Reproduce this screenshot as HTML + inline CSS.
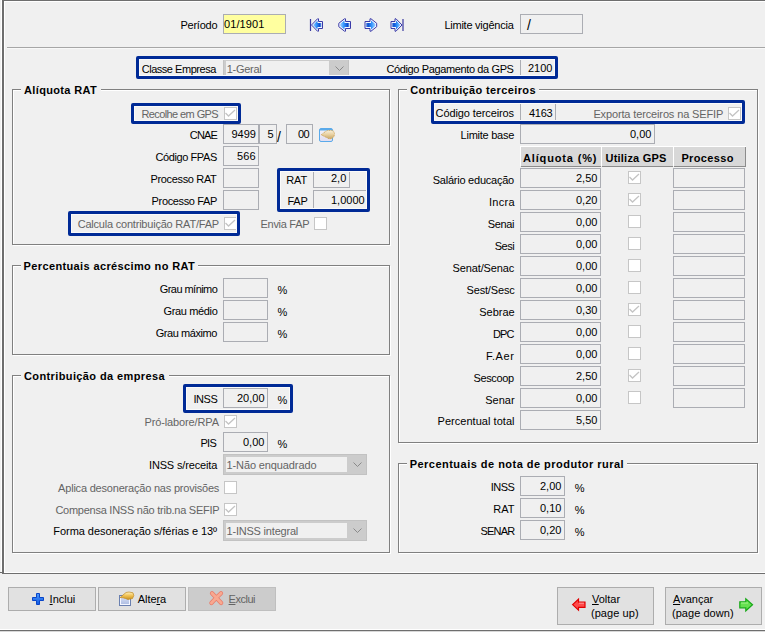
<!DOCTYPE html><html><head><meta charset="utf-8"><style>
html,body{margin:0;padding:0;width:765px;height:632px;overflow:hidden;background:#f0f0f0;position:relative}
.t{position:absolute;font-family:'Liberation Sans', sans-serif;font-size:11px;line-height:13px;white-space:nowrap;color:#000}
svg{overflow:visible}
</style></head><body>
<div style="position:absolute;left:1px;top:0px;width:1px;height:572px;background:#ffffff"></div>
<div style="position:absolute;left:0px;top:572px;width:3px;height:1px;background:#6e6e6e"></div>
<div style="position:absolute;left:2px;top:0px;width:2px;height:574px;background:#6e6e6e"></div>
<div style="position:absolute;left:4px;top:1px;width:761px;height:1px;background:#ffffff"></div>
<div style="position:absolute;left:4px;top:1px;width:1px;height:571px;background:#ffffff"></div>
<div style="position:absolute;left:2px;top:0px;width:763px;height:1px;background:#6e6e6e"></div>
<div style="position:absolute;left:4px;top:572px;width:761px;height:1px;background:#ffffff"></div>
<div style="position:absolute;left:3px;top:573px;width:762px;height:1px;background:#6e6e6e"></div>
<div style="position:absolute;left:0px;top:629px;width:765px;height:1px;background:#ffffff"></div>
<div style="position:absolute;left:0px;top:630px;width:765px;height:1px;background:#6e6e6e"></div>
<div style="position:absolute;left:0px;top:631px;width:765px;height:1px;background:#d8d8d8"></div>
<div class="t" style="top:19px;left:180.50px;letter-spacing:-0.250px;">Período</div>
<div style="position:absolute;left:223px;top:14px;width:61px;height:18px;border:1px solid #abadb3;background:#ffff9f"></div>
<div class="t" style="top:18px;left:224.00px;letter-spacing:0.100px;">01/1901</div>
<svg style="position:absolute;left:310px;top:18px" width="15" height="15"><defs><linearGradient id="gfirst" x1="0" y1="0" x2="1" y2="0"><stop offset="0" stop-color="#9fd0ff"/><stop offset="0.35" stop-color="#3c9cff"/><stop offset="0.8" stop-color="#0a4cd0"/><stop offset="1" stop-color="#8fb4ea"/></linearGradient></defs><g><path d="M1.5,7 L7.5,0.8 H8.5 V3.5 H12.5 V10.5 H8.5 V13.2 H7.5 Z" fill="#f4f8ff" stroke="#3a3aa8" stroke-width="1" stroke-linejoin="round"/><path d="M3,7 L7.5,2.6 V5 H11.5 V9 H7.5 V11.4 Z" fill="url(#gfirst)"/><line x1="0.5" y1="1" x2="0.5" y2="13" stroke="#3838a0" stroke-width="1.2"/></g></svg>
<svg style="position:absolute;left:338px;top:18px" width="15" height="15"><defs><linearGradient id="gprev" x1="0" y1="0" x2="1" y2="0"><stop offset="0" stop-color="#9fd0ff"/><stop offset="0.35" stop-color="#3c9cff"/><stop offset="0.8" stop-color="#0a4cd0"/><stop offset="1" stop-color="#8fb4ea"/></linearGradient></defs><g><path d="M0.8,5.3 L6.5,0.8 H7.5 V3.5 H12.5 V10.5 H7.5 V13.2 H6.5 L0.8,8.7 Z" fill="#f4f8ff" stroke="#3a3aa8" stroke-width="1" stroke-linejoin="round"/><path d="M2.2,6 L6.5,2.6 V5 H11.5 V9 H6.5 V11.4 L2.2,8 Z" fill="url(#gprev)"/></g></svg>
<svg style="position:absolute;left:364px;top:18px" width="15" height="15"><defs><linearGradient id="gnext" x1="0" y1="0" x2="1" y2="0"><stop offset="0" stop-color="#9fd0ff"/><stop offset="0.35" stop-color="#3c9cff"/><stop offset="0.8" stop-color="#0a4cd0"/><stop offset="1" stop-color="#8fb4ea"/></linearGradient></defs><g transform="translate(13.5,0) scale(-1,1)"><path d="M0.8,5.3 L6.5,0.8 H7.5 V3.5 H12.5 V10.5 H7.5 V13.2 H6.5 L0.8,8.7 Z" fill="#f4f8ff" stroke="#3a3aa8" stroke-width="1" stroke-linejoin="round"/><path d="M2.2,6 L6.5,2.6 V5 H11.5 V9 H6.5 V11.4 L2.2,8 Z" fill="url(#gnext)"/></g></svg>
<svg style="position:absolute;left:390px;top:18px" width="15" height="15"><defs><linearGradient id="glast" x1="0" y1="0" x2="1" y2="0"><stop offset="0" stop-color="#9fd0ff"/><stop offset="0.35" stop-color="#3c9cff"/><stop offset="0.8" stop-color="#0a4cd0"/><stop offset="1" stop-color="#8fb4ea"/></linearGradient></defs><g transform="translate(13.5,0) scale(-1,1)"><path d="M1.5,7 L7.5,0.8 H8.5 V3.5 H12.5 V10.5 H8.5 V13.2 H7.5 Z" fill="#f4f8ff" stroke="#3a3aa8" stroke-width="1" stroke-linejoin="round"/><path d="M3,7 L7.5,2.6 V5 H11.5 V9 H7.5 V11.4 Z" fill="url(#glast)"/><line x1="0.5" y1="1" x2="0.5" y2="13" stroke="#3838a0" stroke-width="1.2"/></g></svg>
<div class="t" style="top:19px;left:444.40px;letter-spacing:-0.243px;">Limite vigência</div>
<div style="position:absolute;left:520px;top:14px;width:61px;height:18px;border:1px solid #abadb3;background:#f0f0f0"></div>
<div class="t" style="top:19px;left:527px;font-size:14px;">/</div>
<div style="position:absolute;left:7px;top:47px;width:758px;height:1px;background:#a6a6a6"></div>
<div style="position:absolute;left:7px;top:48px;width:758px;height:1px;background:#f8f8f8"></div>
<div class="t" style="top:63px;left:141.70px;letter-spacing:-0.469px;">Classe Empresa</div>
<div style="position:absolute;left:223px;top:58px;width:124px;height:19px;border:1px solid #c2c2c2;background:#cccccc"></div>
<div style="position:absolute;left:226px;top:61px;width:103px;height:15px;background:#f0f0f0"></div>
<svg style="position:absolute;left:335px;top:66px" width="11" height="7"><polyline points="0.5,0.5 4.5,4.5 8.5,0.5" fill="none" stroke="#8a8a8a" stroke-width="1"/></svg>
<div class="t" style="top:63px;left:226.70px;letter-spacing:-0.283px;color:#646464;">1-Geral</div>
<div class="t" style="top:63px;left:386.50px;letter-spacing:-0.377px;">Código Pagamento da GPS</div>
<div style="position:absolute;left:520px;top:57px;width:35px;height:19px;border:1px solid #abadb3;background:#f0f0f0"></div>
<div class="t" style="top:62px;left:528.00px;">2100</div>
<div style="position:absolute;left:136px;top:56px;width:416px;height:17px;border:3px solid #002a96;border-radius:2px;box-shadow:inset 0 0 0 1px #fafafa"></div>
<div style="position:absolute;left:13px;top:90px;width:377px;height:155px;border-right:1px solid #fff;border-bottom:1px solid #fff;box-shadow:inset 1px 1px 0 #fff"></div>
<div style="position:absolute;left:12px;top:89px;width:376px;height:154px;border:1px solid #808080"></div>
<div style="position:absolute;left:21px;top:88px;width:80px;height:4px;background:#f0f0f0"></div>
<div class="t" style="top:84px;left:24.10px;letter-spacing:0.336px;font-weight:bold;">Alíquota RAT</div>
<div class="t" style="top:108px;left:141.40px;letter-spacing:-0.592px;color:#646464;">Recolhe em GPS</div>
<div style="position:absolute;left:224px;top:107px;width:11px;height:11px;border:1px solid #c6c6c6;background:#ffffff"></div>
<svg style="position:absolute;left:224px;top:107px" width="13" height="13"><polyline points="1.5,6 4.5,9 11,3" fill="none" stroke="#c4c4c4" stroke-width="1.3"/></svg>
<div style="position:absolute;left:131px;top:103px;width:104px;height:15px;border:3px solid #002a96;border-radius:2px;box-shadow:inset 0 0 0 1px #fafafa"></div>
<div class="t" style="top:129px;left:189.80px;letter-spacing:-0.800px;">CNAE</div>
<div style="position:absolute;left:223px;top:124px;width:34px;height:18px;border:1px solid #abadb3;background:#f0f0f0"></div>
<div class="t" style="top:128px;left:231.50px;letter-spacing:-0.033px;">9499</div>
<div style="position:absolute;left:259px;top:124px;width:16px;height:18px;border:1px solid #abadb3;background:#f0f0f0"></div>
<div class="t" style="top:128px;left:267.60px;">5</div>
<div class="t" style="top:131px;left:277px;font-size:14px;">/</div>
<div style="position:absolute;left:286px;top:124px;width:25px;height:18px;border:1px solid #abadb3;background:#f0f0f0"></div>
<div class="t" style="top:128px;left:297.90px;letter-spacing:-0.600px;">00</div>
<svg style="position:absolute;left:319px;top:128px" width="16" height="14"><defs><linearGradient id="wi" x1="0" y1="0" x2="0" y2="1"><stop offset="0" stop-color="#f4f4fa"/><stop offset="1" stop-color="#e0dcf0"/></linearGradient><linearGradient id="hd" x1="0" y1="0" x2="0" y2="1"><stop offset="0" stop-color="#f8f0dc"/><stop offset="0.5" stop-color="#e8d0a0"/><stop offset="1" stop-color="#c8a868"/></linearGradient></defs>
<rect x="0.5" y="0.5" width="13" height="13" rx="1.5" fill="url(#wi)" stroke="#5aaaea" stroke-width="1"/><rect x="1" y="1" width="12" height="1.5" fill="#5aaaea"/>
<path d="M2.2,6.8 L4.5,5 L6.5,3.5 L8.5,2.5 L12,2.3 L14.5,3 L15.5,5.5 L15,8.5 L13,10.5 L10,10.8 L8.5,10 L6.5,9 L4.5,8 Z" fill="url(#hd)" stroke="#caa050" stroke-width="0.8" stroke-dasharray="1.2,0.6"/></svg>
<div class="t" style="top:151px;left:155.60px;letter-spacing:-0.420px;">Código FPAS</div>
<div style="position:absolute;left:223px;top:146px;width:34px;height:18px;border:1px solid #abadb3;background:#f0f0f0"></div>
<div class="t" style="top:150px;left:237.00px;letter-spacing:0.150px;">566</div>
<div class="t" style="top:173px;left:150.50px;letter-spacing:-0.345px;">Processo RAT</div>
<div style="position:absolute;left:223px;top:168px;width:34px;height:18px;border:1px solid #abadb3;background:#f0f0f0"></div>
<div class="t" style="top:195px;left:151.60px;letter-spacing:-0.355px;">Processo FAP</div>
<div style="position:absolute;left:223px;top:190px;width:34px;height:18px;border:1px solid #abadb3;background:#f0f0f0"></div>
<div class="t" style="top:174px;left:286.30px;letter-spacing:-0.150px;">RAT</div>
<div style="position:absolute;left:313px;top:168px;width:35px;height:18px;border:1px solid #abadb3;background:#f0f0f0"></div>
<div class="t" style="top:172px;left:331.00px;">2,0</div>
<div class="t" style="top:195px;left:287.40px;letter-spacing:-0.200px;">FAP</div>
<div style="position:absolute;left:313px;top:190px;width:53px;height:18px;border:1px solid #abadb3;background:#f0f0f0"></div>
<div class="t" style="top:194px;left:331.00px;">1,0000</div>
<div style="position:absolute;left:277px;top:168px;width:87px;height:38px;border:3px solid #002a96;border-radius:2px;box-shadow:inset 0 0 0 1px #fafafa"></div>
<div class="t" style="top:218px;left:77.70px;letter-spacing:-0.211px;color:#646464;">Calcula contribuição RAT/FAP</div>
<div style="position:absolute;left:224px;top:217px;width:11px;height:11px;border:1px solid #c6c6c6;background:#ffffff"></div>
<svg style="position:absolute;left:224px;top:217px" width="13" height="13"><polyline points="1.5,6 4.5,9 11,3" fill="none" stroke="#c4c4c4" stroke-width="1.3"/></svg>
<div style="position:absolute;left:68px;top:211px;width:166px;height:19px;border:3px solid #002a96;border-radius:2px;box-shadow:inset 0 0 0 1px #fafafa"></div>
<div class="t" style="top:218px;left:260.50px;letter-spacing:-0.288px;color:#646464;">Envia FAP</div>
<div style="position:absolute;left:314px;top:217px;width:11px;height:11px;border:1px solid #c6c6c6;background:#ffffff"></div>
<div style="position:absolute;left:13px;top:266px;width:377px;height:89px;border-right:1px solid #fff;border-bottom:1px solid #fff;box-shadow:inset 1px 1px 0 #fff"></div>
<div style="position:absolute;left:12px;top:265px;width:376px;height:88px;border:1px solid #808080"></div>
<div style="position:absolute;left:21px;top:264px;width:177px;height:4px;background:#f0f0f0"></div>
<div class="t" style="top:260px;left:23.60px;letter-spacing:0.367px;font-weight:bold;">Percentuais acréscimo no RAT</div>
<div class="t" style="top:283px;left:159.70px;letter-spacing:-0.540px;">Grau mínimo</div>
<div style="position:absolute;left:223px;top:278px;width:43px;height:18px;border:1px solid #abadb3;background:#f0f0f0"></div>
<div class="t" style="top:284px;left:277.50px;">%</div>
<div class="t" style="top:305px;left:163.60px;letter-spacing:-0.367px;">Grau médio</div>
<div style="position:absolute;left:223px;top:300px;width:43px;height:18px;border:1px solid #abadb3;background:#f0f0f0"></div>
<div class="t" style="top:306px;left:277.50px;">%</div>
<div class="t" style="top:327px;left:155.70px;letter-spacing:-0.440px;">Grau máximo</div>
<div style="position:absolute;left:223px;top:322px;width:43px;height:18px;border:1px solid #abadb3;background:#f0f0f0"></div>
<div class="t" style="top:328px;left:277.50px;">%</div>
<div style="position:absolute;left:13px;top:376px;width:377px;height:177px;border-right:1px solid #fff;border-bottom:1px solid #fff;box-shadow:inset 1px 1px 0 #fff"></div>
<div style="position:absolute;left:12px;top:375px;width:376px;height:176px;border:1px solid #808080"></div>
<div style="position:absolute;left:21px;top:374px;width:148px;height:4px;background:#f0f0f0"></div>
<div class="t" style="top:370px;left:24.00px;letter-spacing:0.386px;font-weight:bold;">Contribuição da empresa</div>
<div class="t" style="top:393px;left:193.50px;letter-spacing:-0.467px;">INSS</div>
<div style="position:absolute;left:223px;top:388px;width:43px;height:18px;border:1px solid #abadb3;background:#f0f0f0"></div>
<div class="t" style="top:392px;left:237.00px;">20,00</div>
<div class="t" style="top:394px;left:277.50px;">%</div>
<div style="position:absolute;left:183px;top:384px;width:104px;height:23px;border:3px solid #002a96;border-radius:2px;box-shadow:inset 0 0 0 1px #fafafa"></div>
<div class="t" style="top:416px;left:144.50px;letter-spacing:-0.131px;color:#646464;">Pró-labore/RPA</div>
<div style="position:absolute;left:224px;top:415px;width:11px;height:11px;border:1px solid #c6c6c6;background:#ffffff"></div>
<svg style="position:absolute;left:224px;top:415px" width="13" height="13"><polyline points="1.5,6 4.5,9 11,3" fill="none" stroke="#c4c4c4" stroke-width="1.3"/></svg>
<div class="t" style="top:437px;left:200.40px;letter-spacing:-0.700px;">PIS</div>
<div style="position:absolute;left:223px;top:432px;width:43px;height:18px;border:1px solid #abadb3;background:#f0f0f0"></div>
<div class="t" style="top:436px;left:243.00px;">0,00</div>
<div class="t" style="top:438px;left:277.50px;">%</div>
<div class="t" style="top:459px;left:149.00px;letter-spacing:-0.154px;">INSS s/receita</div>
<div style="position:absolute;left:223px;top:454px;width:142px;height:19px;border:1px solid #c2c2c2;background:#cccccc"></div>
<div style="position:absolute;left:226px;top:457px;width:121px;height:15px;background:#f0f0f0"></div>
<svg style="position:absolute;left:353px;top:462px" width="11" height="7"><polyline points="0.5,0.5 4.5,4.5 8.5,0.5" fill="none" stroke="#8a8a8a" stroke-width="1"/></svg>
<div class="t" style="top:459px;left:226.50px;letter-spacing:-0.113px;color:#646464;">1-Não enquadrado</div>
<div class="t" style="top:482px;left:58.10px;letter-spacing:-0.203px;color:#646464;">Aplica desoneração nas provisões</div>
<div style="position:absolute;left:224px;top:481px;width:11px;height:11px;border:1px solid #c6c6c6;background:#ffffff"></div>
<div class="t" style="top:504px;left:55.40px;letter-spacing:-0.253px;color:#646464;">Compensa INSS não trib.na SEFIP</div>
<div style="position:absolute;left:224px;top:503px;width:11px;height:11px;border:1px solid #c6c6c6;background:#ffffff"></div>
<svg style="position:absolute;left:224px;top:503px" width="13" height="13"><polyline points="1.5,6 4.5,9 11,3" fill="none" stroke="#c4c4c4" stroke-width="1.3"/></svg>
<div class="t" style="top:525px;left:53.30px;letter-spacing:-0.052px;">Forma desoneração s/férias e 13º</div>
<div style="position:absolute;left:223px;top:520px;width:142px;height:19px;border:1px solid #c2c2c2;background:#cccccc"></div>
<div style="position:absolute;left:226px;top:523px;width:121px;height:15px;background:#f0f0f0"></div>
<svg style="position:absolute;left:353px;top:528px" width="11" height="7"><polyline points="0.5,0.5 4.5,4.5 8.5,0.5" fill="none" stroke="#8a8a8a" stroke-width="1"/></svg>
<div class="t" style="top:525px;left:226.50px;letter-spacing:-0.200px;color:#646464;">1-INSS integral</div>
<div style="position:absolute;left:399px;top:90px;width:359px;height:353px;border-right:1px solid #fff;border-bottom:1px solid #fff;box-shadow:inset 1px 1px 0 #fff"></div>
<div style="position:absolute;left:398px;top:89px;width:358px;height:352px;border:1px solid #808080"></div>
<div style="position:absolute;left:407px;top:88px;width:132px;height:4px;background:#f0f0f0"></div>
<div class="t" style="top:84px;left:410.30px;letter-spacing:0.376px;font-weight:bold;">Contribuição terceiros</div>
<div class="t" style="top:107px;left:435.60px;letter-spacing:-0.107px;">Código terceiros</div>
<div style="position:absolute;left:520px;top:102px;width:34px;height:19px;border:1px solid #abadb3;background:#f0f0f0"></div>
<div class="t" style="top:107px;left:529.00px;letter-spacing:-0.300px;">4163</div>
<div class="t" style="top:108px;left:593.40px;letter-spacing:-0.136px;color:#646464;">Exporta terceiros na SEFIP</div>
<div style="position:absolute;left:728px;top:107px;width:11px;height:11px;border:1px solid #c6c6c6;background:#ffffff"></div>
<svg style="position:absolute;left:728px;top:107px" width="13" height="13"><polyline points="1.5,6 4.5,9 11,3" fill="none" stroke="#c4c4c4" stroke-width="1.3"/></svg>
<div style="position:absolute;left:431px;top:100px;width:308px;height:18px;border:3px solid #002a96;border-radius:2px;box-shadow:inset 0 0 0 1px #fafafa"></div>
<div class="t" style="top:129px;left:460.60px;letter-spacing:-0.250px;">Limite base</div>
<div style="position:absolute;left:520px;top:124px;width:133px;height:18px;border:1px solid #abadb3;background:#f0f0f0"></div>
<div class="t" style="top:128px;left:630.00px;">0,00</div>
<div style="position:absolute;left:520px;top:146px;width:81px;height:1px;background:#ffffff"></div>
<div style="position:absolute;left:520px;top:146px;width:1px;height:20px;background:#ffffff"></div>
<div style="position:absolute;left:521px;top:147px;width:80px;height:19px;background:#d8d8d8"></div>
<div style="position:absolute;left:521px;top:166px;width:80px;height:1px;background:#8c8c8c"></div>
<div style="position:absolute;left:601px;top:146px;width:72px;height:1px;background:#ffffff"></div>
<div style="position:absolute;left:601px;top:146px;width:1px;height:20px;background:#ffffff"></div>
<div style="position:absolute;left:602px;top:147px;width:71px;height:19px;background:#d8d8d8"></div>
<div style="position:absolute;left:602px;top:166px;width:71px;height:1px;background:#8c8c8c"></div>
<div style="position:absolute;left:673px;top:146px;width:73px;height:1px;background:#ffffff"></div>
<div style="position:absolute;left:673px;top:146px;width:1px;height:20px;background:#ffffff"></div>
<div style="position:absolute;left:674px;top:147px;width:72px;height:19px;background:#d8d8d8"></div>
<div style="position:absolute;left:674px;top:166px;width:72px;height:1px;background:#8c8c8c"></div>
<div style="position:absolute;left:745px;top:147px;width:1px;height:20px;background:#8c8c8c"></div>
<div class="t" style="top:152px;left:523.00px;letter-spacing:0.845px;font-weight:bold;">Alíquota (%)</div>
<div class="t" style="top:152px;left:605.50px;letter-spacing:0.220px;font-weight:bold;">Utiliza GPS</div>
<div class="t" style="top:152px;left:681.40px;letter-spacing:0.371px;font-weight:bold;">Processo</div>
<div class="t" style="top:174px;left:432.70px;letter-spacing:-0.233px;">Salário educação</div>
<div style="position:absolute;left:520px;top:168px;width:79px;height:18px;border:1px solid #abadb3;background:#f0f0f0"></div>
<div class="t" style="top:172px;left:576.00px;">2,50</div>
<div style="position:absolute;left:628px;top:171px;width:11px;height:11px;border:1px solid #c6c6c6;background:#ffffff"></div>
<svg style="position:absolute;left:628px;top:171px" width="13" height="13"><polyline points="1.5,6 4.5,9 11,3" fill="none" stroke="#c4c4c4" stroke-width="1.3"/></svg>
<div style="position:absolute;left:673px;top:168px;width:70px;height:18px;border:1px solid #abadb3;background:#f0f0f0"></div>
<div class="t" style="top:196px;left:488.90px;letter-spacing:0.325px;">Incra</div>
<div style="position:absolute;left:520px;top:190px;width:79px;height:18px;border:1px solid #abadb3;background:#f0f0f0"></div>
<div class="t" style="top:194px;left:576.00px;">0,20</div>
<div style="position:absolute;left:628px;top:193px;width:11px;height:11px;border:1px solid #c6c6c6;background:#ffffff"></div>
<svg style="position:absolute;left:628px;top:193px" width="13" height="13"><polyline points="1.5,6 4.5,9 11,3" fill="none" stroke="#c4c4c4" stroke-width="1.3"/></svg>
<div style="position:absolute;left:673px;top:190px;width:70px;height:18px;border:1px solid #abadb3;background:#f0f0f0"></div>
<div class="t" style="top:218px;left:487.70px;letter-spacing:-0.375px;">Senai</div>
<div style="position:absolute;left:520px;top:212px;width:79px;height:18px;border:1px solid #abadb3;background:#f0f0f0"></div>
<div class="t" style="top:216px;left:576.00px;">0,00</div>
<div style="position:absolute;left:628px;top:215px;width:11px;height:11px;border:1px solid #c6c6c6;background:#ffffff"></div>
<div style="position:absolute;left:673px;top:212px;width:70px;height:18px;border:1px solid #abadb3;background:#f0f0f0"></div>
<div class="t" style="top:240px;left:494.70px;letter-spacing:-0.500px;">Sesi</div>
<div style="position:absolute;left:520px;top:234px;width:79px;height:18px;border:1px solid #abadb3;background:#f0f0f0"></div>
<div class="t" style="top:238px;left:576.00px;">0,00</div>
<div style="position:absolute;left:628px;top:237px;width:11px;height:11px;border:1px solid #c6c6c6;background:#ffffff"></div>
<div style="position:absolute;left:673px;top:234px;width:70px;height:18px;border:1px solid #abadb3;background:#f0f0f0"></div>
<div class="t" style="top:262px;left:452.60px;letter-spacing:-0.140px;">Senat/Senac</div>
<div style="position:absolute;left:520px;top:256px;width:79px;height:18px;border:1px solid #abadb3;background:#f0f0f0"></div>
<div class="t" style="top:260px;left:576.00px;">0,00</div>
<div style="position:absolute;left:628px;top:259px;width:11px;height:11px;border:1px solid #c6c6c6;background:#ffffff"></div>
<div style="position:absolute;left:673px;top:256px;width:70px;height:18px;border:1px solid #abadb3;background:#f0f0f0"></div>
<div class="t" style="top:284px;left:466.50px;letter-spacing:-0.162px;">Sest/Sesc</div>
<div style="position:absolute;left:520px;top:278px;width:79px;height:18px;border:1px solid #abadb3;background:#f0f0f0"></div>
<div class="t" style="top:282px;left:576.00px;">0,00</div>
<div style="position:absolute;left:628px;top:281px;width:11px;height:11px;border:1px solid #c6c6c6;background:#ffffff"></div>
<div style="position:absolute;left:673px;top:278px;width:70px;height:18px;border:1px solid #abadb3;background:#f0f0f0"></div>
<div class="t" style="top:306px;left:479.30px;letter-spacing:-0.020px;">Sebrae</div>
<div style="position:absolute;left:520px;top:300px;width:79px;height:18px;border:1px solid #abadb3;background:#f0f0f0"></div>
<div class="t" style="top:304px;left:576.00px;">0,30</div>
<div style="position:absolute;left:628px;top:303px;width:11px;height:11px;border:1px solid #c6c6c6;background:#ffffff"></div>
<svg style="position:absolute;left:628px;top:303px" width="13" height="13"><polyline points="1.5,6 4.5,9 11,3" fill="none" stroke="#c4c4c4" stroke-width="1.3"/></svg>
<div style="position:absolute;left:673px;top:300px;width:70px;height:18px;border:1px solid #abadb3;background:#f0f0f0"></div>
<div class="t" style="top:328px;left:493.00px;letter-spacing:-0.900px;">DPC</div>
<div style="position:absolute;left:520px;top:322px;width:79px;height:18px;border:1px solid #abadb3;background:#f0f0f0"></div>
<div class="t" style="top:326px;left:576.00px;">0,00</div>
<div style="position:absolute;left:628px;top:325px;width:11px;height:11px;border:1px solid #c6c6c6;background:#ffffff"></div>
<div style="position:absolute;left:673px;top:322px;width:70px;height:18px;border:1px solid #abadb3;background:#f0f0f0"></div>
<div class="t" style="top:350px;left:485.90px;letter-spacing:0.575px;">F.Aer</div>
<div style="position:absolute;left:520px;top:344px;width:79px;height:18px;border:1px solid #abadb3;background:#f0f0f0"></div>
<div class="t" style="top:348px;left:576.00px;">0,00</div>
<div style="position:absolute;left:628px;top:347px;width:11px;height:11px;border:1px solid #c6c6c6;background:#ffffff"></div>
<div style="position:absolute;left:673px;top:344px;width:70px;height:18px;border:1px solid #abadb3;background:#f0f0f0"></div>
<div class="t" style="top:372px;left:473.50px;letter-spacing:-0.383px;">Sescoop</div>
<div style="position:absolute;left:520px;top:366px;width:79px;height:18px;border:1px solid #abadb3;background:#f0f0f0"></div>
<div class="t" style="top:370px;left:576.00px;">2,50</div>
<div style="position:absolute;left:628px;top:369px;width:11px;height:11px;border:1px solid #c6c6c6;background:#ffffff"></div>
<svg style="position:absolute;left:628px;top:369px" width="13" height="13"><polyline points="1.5,6 4.5,9 11,3" fill="none" stroke="#c4c4c4" stroke-width="1.3"/></svg>
<div style="position:absolute;left:673px;top:366px;width:70px;height:18px;border:1px solid #abadb3;background:#f0f0f0"></div>
<div class="t" style="top:394px;left:485.30px;letter-spacing:-0.025px;">Senar</div>
<div style="position:absolute;left:520px;top:388px;width:79px;height:18px;border:1px solid #abadb3;background:#f0f0f0"></div>
<div class="t" style="top:392px;left:576.00px;">0,00</div>
<div style="position:absolute;left:628px;top:391px;width:11px;height:11px;border:1px solid #c6c6c6;background:#ffffff"></div>
<div style="position:absolute;left:673px;top:388px;width:70px;height:18px;border:1px solid #abadb3;background:#f0f0f0"></div>
<div class="t" style="top:415px;left:437.50px;letter-spacing:0.040px;">Percentual total</div>
<div style="position:absolute;left:520px;top:410px;width:79px;height:18px;border:1px solid #abadb3;background:#f0f0f0"></div>
<div class="t" style="top:414px;left:576.00px;">5,50</div>
<div style="position:absolute;left:399px;top:464px;width:359px;height:89px;border-right:1px solid #fff;border-bottom:1px solid #fff;box-shadow:inset 1px 1px 0 #fff"></div>
<div style="position:absolute;left:398px;top:463px;width:358px;height:88px;border:1px solid #808080"></div>
<div style="position:absolute;left:407px;top:462px;width:220px;height:4px;background:#f0f0f0"></div>
<div class="t" style="top:458px;left:409.70px;letter-spacing:0.475px;font-weight:bold;">Percentuais de nota de produtor rural</div>
<div class="t" style="top:481px;left:490.80px;letter-spacing:-0.533px;">INSS</div>
<div style="position:absolute;left:520px;top:476px;width:43px;height:18px;border:1px solid #abadb3;background:#f0f0f0"></div>
<div class="t" style="top:480px;left:540.00px;">2,00</div>
<div class="t" style="top:482px;left:574.70px;">%</div>
<div class="t" style="top:503px;left:493.30px;letter-spacing:-0.050px;">RAT</div>
<div style="position:absolute;left:520px;top:498px;width:43px;height:18px;border:1px solid #abadb3;background:#f0f0f0"></div>
<div class="t" style="top:502px;left:540.00px;">0,10</div>
<div class="t" style="top:504px;left:574.70px;">%</div>
<div class="t" style="top:525px;left:480.60px;letter-spacing:-0.850px;">SENAR</div>
<div style="position:absolute;left:520px;top:520px;width:43px;height:18px;border:1px solid #abadb3;background:#f0f0f0"></div>
<div class="t" style="top:524px;left:540.00px;">0,20</div>
<div class="t" style="top:526px;left:574.70px;">%</div>
<div style="position:absolute;left:8px;top:587px;width:86px;height:22px;border:1px solid #adadad;background:#e1e1e1"></div>
<svg style="position:absolute;left:32px;top:593px" width="12" height="12"><defs><linearGradient id="pl" x1="0" y1="0" x2="0" y2="1"><stop offset="0" stop-color="#4a9aff"/><stop offset="1" stop-color="#1058e0"/></linearGradient></defs><path d="M4.5,0.5 H7.5 V4.5 H11.5 V7.5 H7.5 V11.5 H4.5 V7.5 H0.5 V4.5 H4.5 Z" fill="url(#pl)" stroke="#0844c8" stroke-width="1"/></svg>
<div class="t" style="top:593px;left:49.60px;letter-spacing:-0.020px;"><u>I</u>nclui</div>
<div style="position:absolute;left:98px;top:587px;width:86px;height:22px;border:1px solid #adadad;background:#e1e1e1"></div>
<svg style="position:absolute;left:118px;top:591px" width="17" height="16"><defs><linearGradient id="wa" x1="0" y1="0" x2="0" y2="1"><stop offset="0" stop-color="#dde4f6"/><stop offset="1" stop-color="#a8b8e0"/></linearGradient><linearGradient id="ha" x1="0" y1="0" x2="0" y2="1"><stop offset="0" stop-color="#fff2c0"/><stop offset="0.5" stop-color="#f0c050"/><stop offset="1" stop-color="#c89020"/></linearGradient></defs>
<rect x="1.5" y="4.5" width="11" height="10" fill="url(#wa)" stroke="#6a80b0" stroke-width="1"/><rect x="2.5" y="5.5" width="9" height="8" fill="none" stroke="#f4f6ff" stroke-width="1"/>
<path d="M2,6.5 L5,4 L8,1.5 L11,1 L15,1.8 L15.8,4.5 L14.5,7.5 L10,8.5 L7.5,7.5 L5,6.8 Z" fill="url(#ha)" stroke="#c08a20" stroke-width="0.7" stroke-linejoin="round"/></svg>
<div class="t" style="top:593px;left:137.70px;letter-spacing:-0.040px;">Alte<u>r</u>a</div>
<div style="position:absolute;left:188px;top:587px;width:86px;height:22px;border:1px solid #bfbfbf;background:#cccccc"></div>
<svg style="position:absolute;left:209px;top:591px" width="15" height="15"><path d="M3,2.2 L7.3,6.8 L12,2.2 M7.3,6.8 L12.2,12 M7.3,6.8 L2.4,12" fill="none" stroke="#e87a68" stroke-width="4.2" stroke-linecap="round" stroke-linejoin="round"/><path d="M3,2.2 L7.3,6.8 L12,2.2 M7.3,6.8 L12.2,12 M7.3,6.8 L2.4,12" fill="none" stroke="#f8a890" stroke-width="2.8" stroke-linecap="round" stroke-linejoin="round"/></svg>
<div class="t" style="top:593px;left:228.60px;letter-spacing:-0.480px;color:#646464;"><u>E</u>xclui</div>
<div style="position:absolute;left:557px;top:587px;width:95px;height:36px;border:1px solid #adadad;background:#e1e1e1"></div>
<svg style="position:absolute;left:572px;top:598px" width="15" height="14"><path d="M0.6,6.6 L6.5,1.2 V4.2 H13 V9.4 H6.5 V12.2 Z" fill="#ff4a4a" stroke="#e00000" stroke-width="1.2" stroke-linejoin="miter"/><path d="M7,5.2 H12" stroke="#ff9a9a" stroke-width="1"/></svg>
<div class="t" style="top:593px;left:592px;"><u>V</u>oltar</div>
<div class="t" style="top:607px;left:590.90px;letter-spacing:0.075px;">(page up)</div>
<div style="position:absolute;left:665px;top:587px;width:95px;height:36px;border:1px solid #adadad;background:#e1e1e1"></div>
<div class="t" style="top:593px;left:673px;"><u>A</u>vançar</div>
<div class="t" style="top:607px;left:672.00px;letter-spacing:0.040px;">(page down)</div>
<svg style="position:absolute;left:739px;top:598px" width="15" height="14"><path d="M13.5,6.8 L6.8,0.8 V3.8 H0.8 V9.8 H6.8 V12.8 Z" fill="#66e050" stroke="#18a818" stroke-width="1.2" stroke-linejoin="miter"/><path d="M2,5 H9" stroke="#a8f890" stroke-width="1"/></svg>
</body></html>
